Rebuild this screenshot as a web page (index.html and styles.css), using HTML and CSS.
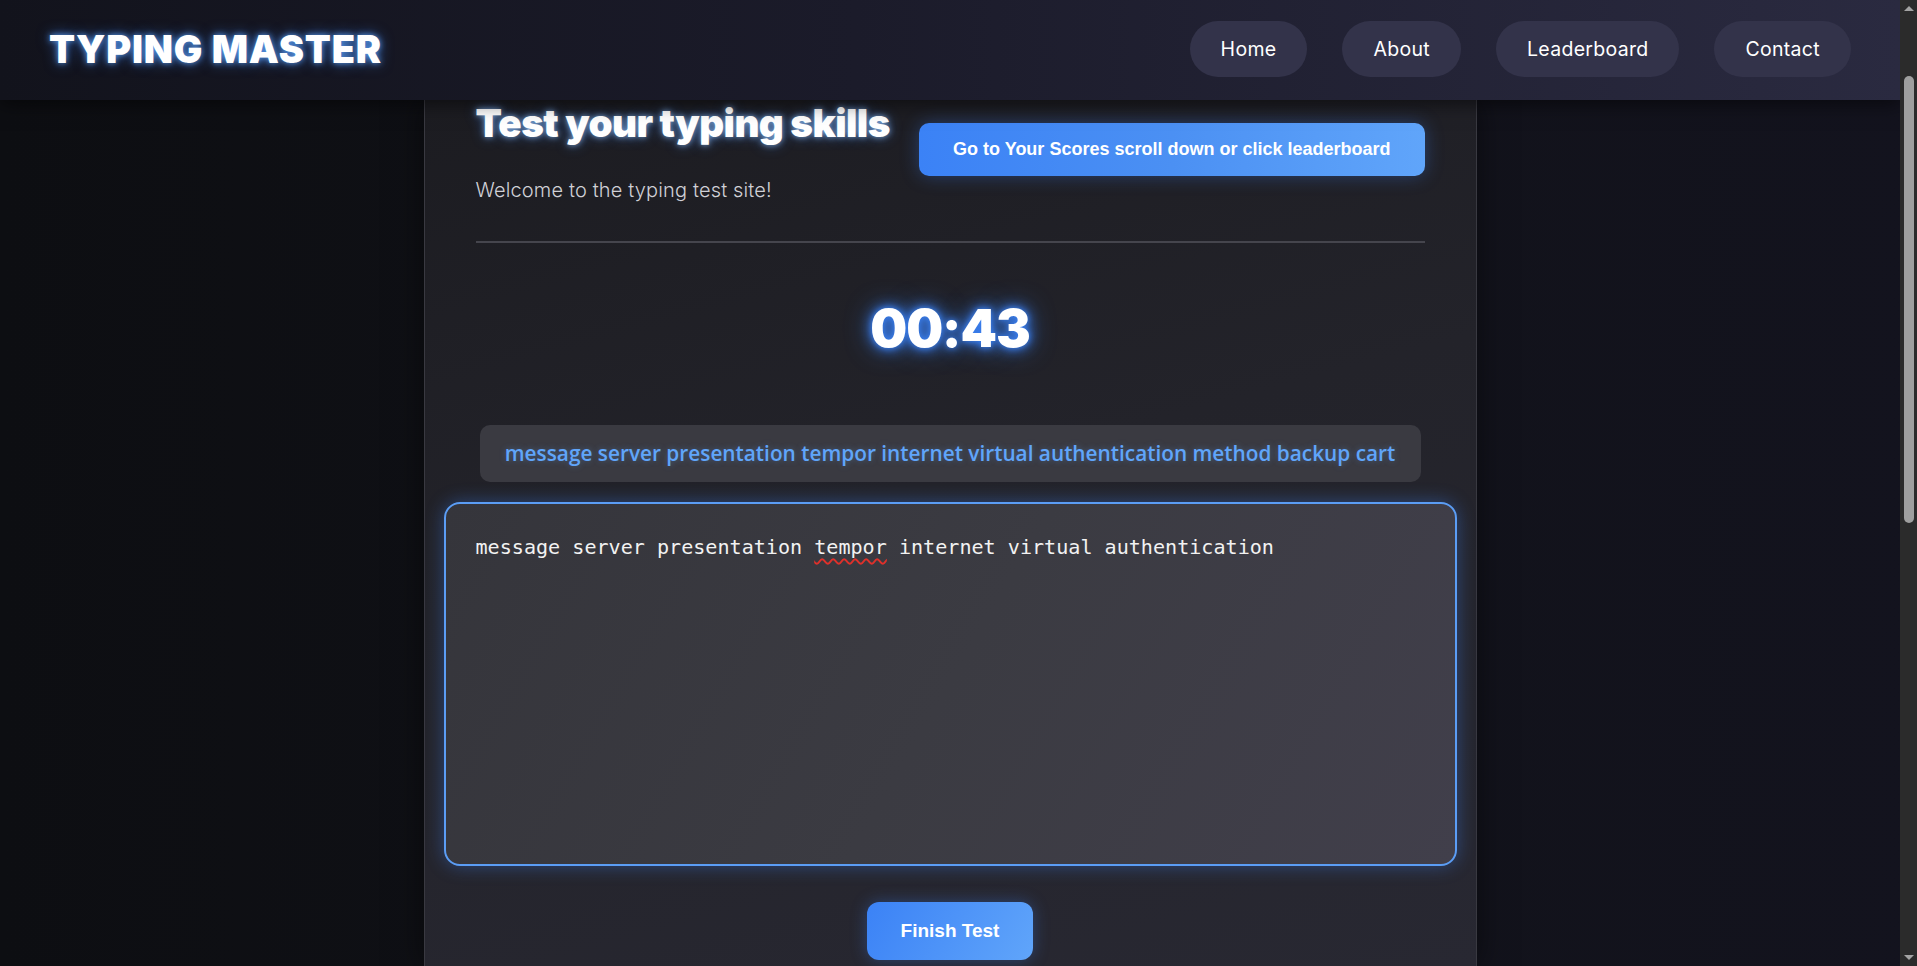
FILE: index.html
```html
<!DOCTYPE html>
<html lang="en">
<head>
<meta charset="utf-8">
<title>Typing Master</title>
<link rel="stylesheet" href="styles.css">
</head>
<body>
<div class="viewport">
  <header class="navbar">
    <div class="logo">TYPING MASTER</div>
    <nav class="nav-links">
      <a class="nav-link" href="#">Home</a>
      <a class="nav-link" href="#">About</a>
      <a class="nav-link" href="#">Leaderboard</a>
      <a class="nav-link" href="#">Contact</a>
    </nav>
  </header>
  <main class="page">
    <section class="card">
      <div class="card-header">
        <div class="intro">
          <h1 class="title">Test your typing skills</h1>
          <p class="subtitle">Welcome to the typing test site!</p>
        </div>
        <a class="scores-btn" href="#">Go to Your Scores scroll down or click leaderboard</a>
      </div>
      <div class="divider"></div>
      <div class="timer">00:43</div>
      <div class="sample">message server presentation tempor internet virtual authentication method backup cart</div>
      <div class="typing-box" role="textbox">message server presentation <span class="misspelled">tempor</span> internet virtual authentication</div>
      <div class="actions"><button class="finish-btn" type="button">Finish Test</button></div>
    </section>
  </main>
</div>
<div class="scrollbar" aria-hidden="true">
  <div class="scroll-arrow up"></div>
  <div class="scroll-track"><div class="scroll-thumb"></div></div>
  <div class="scroll-arrow down"></div>
</div>
</body>
</html>
```

FILE: styles.css
```css
* {
  box-sizing: border-box;
}

html,
body {
  height: 100%;
}

body {
  margin: 0;
  display: flex;
  overflow: hidden;
  background: linear-gradient(90deg, #0d0e12 0%, #111218 50%, #13131e 100%);
  color: #ffffff;
  font-family: "Inter", "Liberation Sans", sans-serif;
}

.viewport {
  flex: 1;
  height: 100vh;
  display: flex;
  flex-direction: column;
  overflow: hidden;
}

/* ---------- navbar ---------- */
.navbar {
  position: relative;
  z-index: 10;
  flex: none;
  height: 100px;
  padding: 0 49px;
  display: flex;
  align-items: center;
  justify-content: space-between;
  background: linear-gradient(90deg, #12131c 0%, #1b1b2a 45%, #2a2a40 100%);
  box-shadow: 0 4px 18px rgba(0, 0, 0, 0.55);
}

.logo {
  font-family: "Inter", sans-serif;
  font-weight: 900;
  font-size: 38px;
  letter-spacing: 0.8px;
  color: #ffffff;
  margin-top: -2px;
  text-shadow: 0 0 6px rgba(96, 165, 250, 0.9), 0 0 14px rgba(59, 130, 246, 0.6);
}

.nav-links {
  display: flex;
  gap: 35px;
  margin-top: -3px;
}

.nav-link {
  display: block;
  padding: 0 31px;
  height: 56px;
  line-height: 56px;
  border-radius: 28px;
  background: #33334a;
  color: #ffffff;
  text-decoration: none;
  font-family: "Inter", sans-serif;
  font-size: 19.5px;
  letter-spacing: 0.3px;
}

/* ---------- card ---------- */
.page {
  flex: 1;
  display: flex;
  justify-content: center;
  min-height: 0;
}

.card {
  width: 1053px;
  padding: 0 19px;
  border-left: 1px solid #393941;
  border-right: 1px solid #393941;
  background: linear-gradient(165deg, #1c1c21 0%, #23232a 45%, #282832 100%);
  box-shadow: 0 0 30px rgba(0, 0, 0, 0.5);
}

.card-header {
  margin: 0 32px;
  display: flex;
  align-items: center;
  justify-content: space-between;
}

.title {
  margin: 0;
  font-family: "Inter", sans-serif;
  font-weight: 900;
  font-size: 38.6px;
  line-height: 46px;
  letter-spacing: -0.6px;
  color: #ffffff;
  text-shadow: 0 0 6px rgba(147, 197, 253, 0.8), 0 0 14px rgba(59, 130, 246, 0.45);
}

.subtitle {
  margin: 31px 0 0;
  font-family: "Inter", sans-serif;
  font-weight: 300;
  font-size: 20px;
  line-height: 27px;
  letter-spacing: 0.15px;
  color: #d0d0d6;
}

.scores-btn {
  display: block;
  margin-bottom: 5px;
  padding: 16px 34px;
  border-radius: 10px;
  background: linear-gradient(90deg, #3b82f6 0%, #4b90f3 50%, #60a5fa 100%);
  color: #ffffff;
  text-decoration: none;
  font-family: "Liberation Sans", Arial, sans-serif;
  font-weight: 700;
  font-size: 18px;
  line-height: 21px;
  white-space: nowrap;
  box-shadow: 0 0 18px rgba(59, 130, 246, 0.35);
}

.divider {
  margin: 37px 32px 0;
  height: 2px;
  background: #45454d;
}

.timer {
  margin-top: 52px;
  text-align: center;
  font-family: "Inter", sans-serif;
  font-weight: 900;
  font-size: 52px;
  line-height: 67px;
  letter-spacing: -1px;
  color: #ffffff;
  text-shadow: 0 0 6px #3b82f6, 0 0 14px #3b82f6, 0 0 26px rgba(59, 130, 246, 0.7);
}

.sample {
  margin: 63px 36px 0;
  padding: 15px 20px;
  border-radius: 10px;
  background: #3a3a41;
  text-align: center;
  font-family: "Open Sans", sans-serif;
  font-weight: 600;
  font-size: 20.8px;
  line-height: 27px;
  color: #60a5fa;
  text-shadow: 0 0 6px rgba(96, 165, 250, 0.35);
  white-space: nowrap;
}

.typing-box {
  margin-top: 20px;
  height: 364px;
  padding: 28px 30px;
  border: 2px solid #5b9df5;
  border-radius: 16px;
  background: linear-gradient(120deg, #35353b 0%, #3b3b42 50%, #413f4b 100%);
  box-shadow: 0 0 18px rgba(59, 130, 246, 0.4);
  font-family: "DejaVu Sans Mono", "Liberation Mono", monospace;
  font-size: 20.1px;
  line-height: 30px;
  color: #f2f2f2;
  white-space: pre-wrap;
}

.misspelled {
  text-decoration: underline wavy #e0302a;
  text-decoration-thickness: 1.5px;
  text-underline-offset: 4px;
}

.actions {
  margin-top: 36px;
  display: flex;
  justify-content: center;
}

.finish-btn {
  padding: 18px 34px;
  border: none;
  border-radius: 12px;
  background: linear-gradient(120deg, #3b82f6 0%, #60a5fa 100%);
  color: #ffffff;
  font-family: "Liberation Sans", Arial, sans-serif;
  font-weight: 700;
  font-size: 19px;
  line-height: 22px;
  box-shadow: 0 0 16px rgba(59, 130, 246, 0.35);
}

/* ---------- scrollbar ---------- */
.scrollbar {
  flex: none;
  width: 17px;
  height: 100vh;
  display: flex;
  flex-direction: column;
  background: #2b2b2b;
}

.scroll-arrow {
  flex: none;
  height: 17px;
  display: flex;
  justify-content: center;
  align-items: center;
}

.scroll-arrow::before {
  content: "";
  width: 0;
  height: 0;
  border-left: 5px solid transparent;
  border-right: 5px solid transparent;
}

.scroll-arrow.up::before {
  border-bottom: 5px solid #a3a3a3;
}

.scroll-arrow.down::before {
  border-top: 5px solid #a3a3a3;
}

.scroll-track {
  flex: 1;
  padding-left: 4px;
}

.scroll-thumb {
  width: 10px;
  height: 447px;
  margin-top: 59px;
  border-radius: 5px;
  background: #9f9f9f;
}
```
